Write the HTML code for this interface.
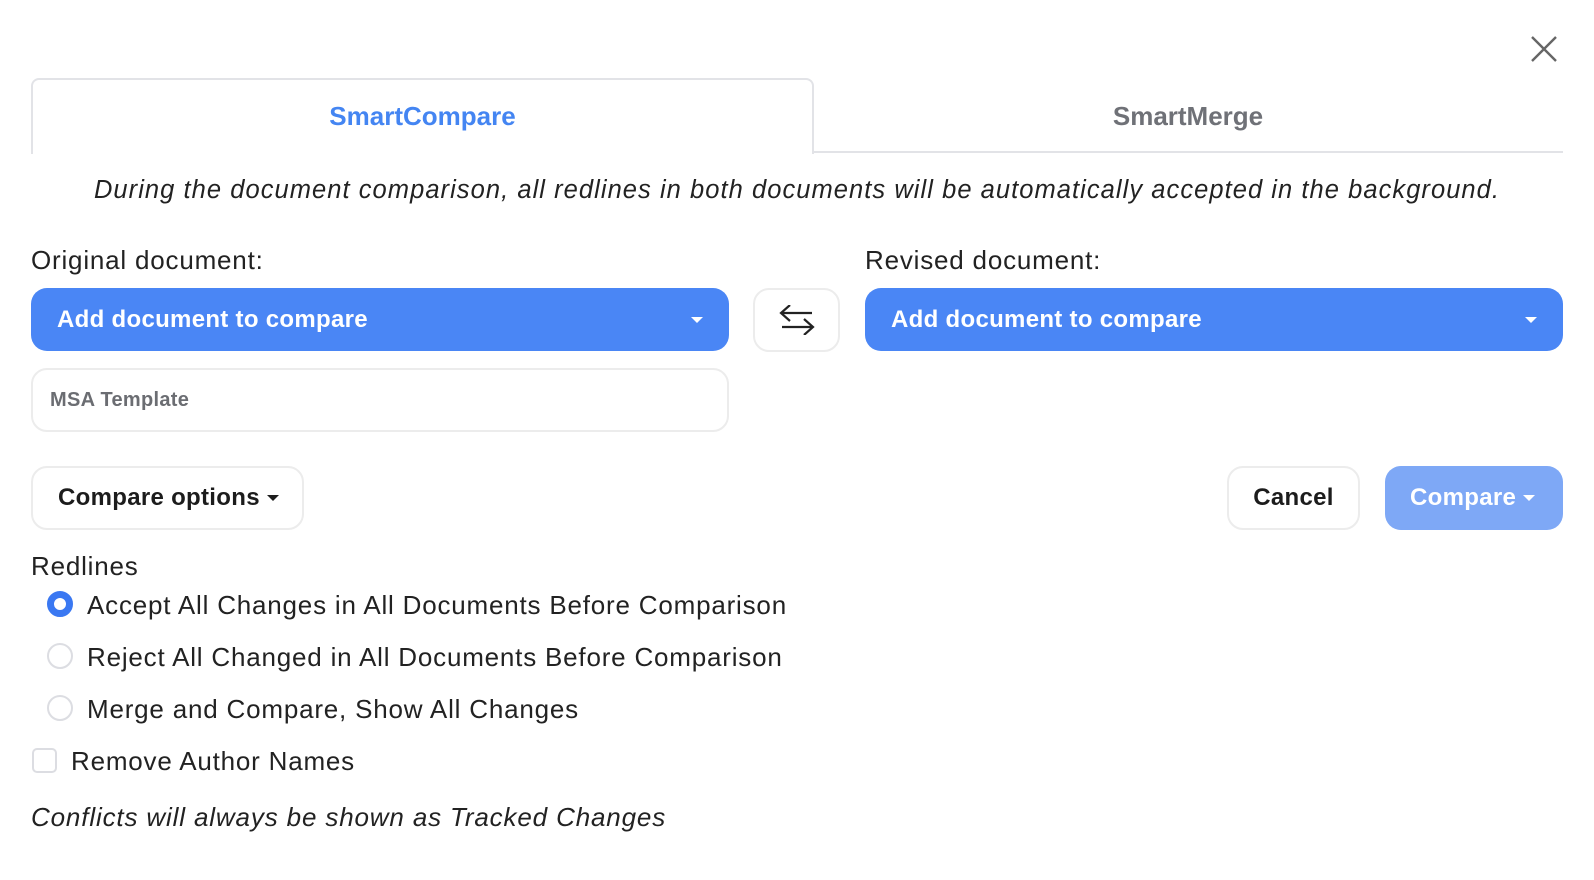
<!DOCTYPE html>
<html><head><meta charset="utf-8"><style>
*{box-sizing:border-box;margin:0;padding:0}
body{width:1594px;height:880px;background:#fff;font-family:"Liberation Sans",sans-serif;color:#1f1f1f;position:relative;overflow:hidden}
.a{position:absolute;white-space:nowrap}
.btn{position:absolute;border-radius:16px;display:flex;align-items:center;font-weight:bold;font-size:24px;letter-spacing:0.3px}
.blue{background:#4a86f5;color:#fff;padding-left:26px}
.out{border:2px solid #ececec;background:#fff;color:#1c1c1c}
.tri{display:inline-block;width:0;height:0;border-left:6px solid transparent;border-right:6px solid transparent;border-top:6px solid currentColor}
.radio{position:absolute;width:26px;height:26px;border-radius:50%;border:2px solid #dcdde2}
.lbl{font-size:26px;color:#222;letter-spacing:0.8px}
</style></head><body>
<svg class="a" style="left:1530px;top:35px" width="28" height="28" viewBox="0 0 28 28"><path d="M2 2L26 26M26 2L2 26" stroke="#666" stroke-width="2.4" fill="none"/></svg>
<div class="a" style="left:31px;top:78px;width:783px;height:76px;border:2px solid #e2e3e7;border-bottom:none;border-radius:8px 8px 0 0;background:#fff"></div>
<div class="a" style="left:813px;top:151px;width:750px;height:2px;background:#e2e3e7"></div>
<div class="a" style="left:31px;top:101px;width:783px;text-align:center;font-size:26px;font-weight:bold;color:#4485f2">SmartCompare</div>
<div class="a" style="left:813px;top:101px;width:750px;text-align:center;font-size:26px;font-weight:bold;color:#6f7177">SmartMerge</div>
<div class="a" style="left:0;top:176px;width:1594px;text-align:center;font-size:25.5px;font-style:italic;color:#222;letter-spacing:1.05px">During the document comparison, all redlines in both documents will be automatically accepted in the background.</div>
<div class="a lbl" style="left:31px;top:245px">Original document:</div>
<div class="a lbl" style="left:865px;top:245px">Revised document:</div>
<div class="btn blue" style="left:31px;top:288px;width:698px;height:63px">Add document to compare<span class="tri" style="position:absolute;right:26px;top:29px"></span></div>
<div class="btn out" style="left:753px;top:288px;width:87px;height:64px;justify-content:center">
<svg width="36" height="30" viewBox="0 0 36 30"><path d="M33 8H2M11 0L2 8L11 16M3 22H34M25 14L34 22L25 30" stroke="#222" stroke-width="2.2" fill="none"/></svg></div>
<div class="btn blue" style="left:865px;top:288px;width:698px;height:63px">Add document to compare<span class="tri" style="position:absolute;right:26px;top:29px"></span></div>
<div class="btn out" style="left:31px;top:368px;width:698px;height:64px;padding-left:17px;font-size:20px;color:#6b6d72">MSA Template</div>
<div class="btn out" style="left:31px;top:466px;width:273px;height:64px;padding-left:25px">Compare options&nbsp;<span class="tri"></span></div>
<div class="btn out" style="left:1227px;top:466px;width:133px;height:64px;justify-content:center">Cancel</div>
<div class="btn" style="left:1385px;top:466px;width:178px;height:64px;background:#7ea8f6;color:#fff;padding-left:25px">Compare&nbsp;<span class="tri"></span></div>
<div class="a lbl" style="left:31px;top:551px">Redlines</div>
<div class="radio" style="left:47px;top:591px;border:7px solid #3a78f2"></div>
<div class="a lbl" style="left:87px;top:590px">Accept All Changes in All Documents Before Comparison</div>
<div class="radio" style="left:47px;top:643px"></div>
<div class="a lbl" style="left:87px;top:642px">Reject All Changed in All Documents Before Comparison</div>
<div class="radio" style="left:47px;top:695px"></div>
<div class="a lbl" style="left:87px;top:694px">Merge and Compare, Show All Changes</div>
<div class="a" style="left:32px;top:748px;width:25px;height:25px;border:2px solid #dcdde2;border-radius:5px"></div>
<div class="a lbl" style="left:71px;top:746px">Remove Author Names</div>
<div class="a lbl" style="left:31px;top:802px;font-style:italic;letter-spacing:0.85px">Conflicts will always be shown as Tracked Changes</div>
</body></html>
